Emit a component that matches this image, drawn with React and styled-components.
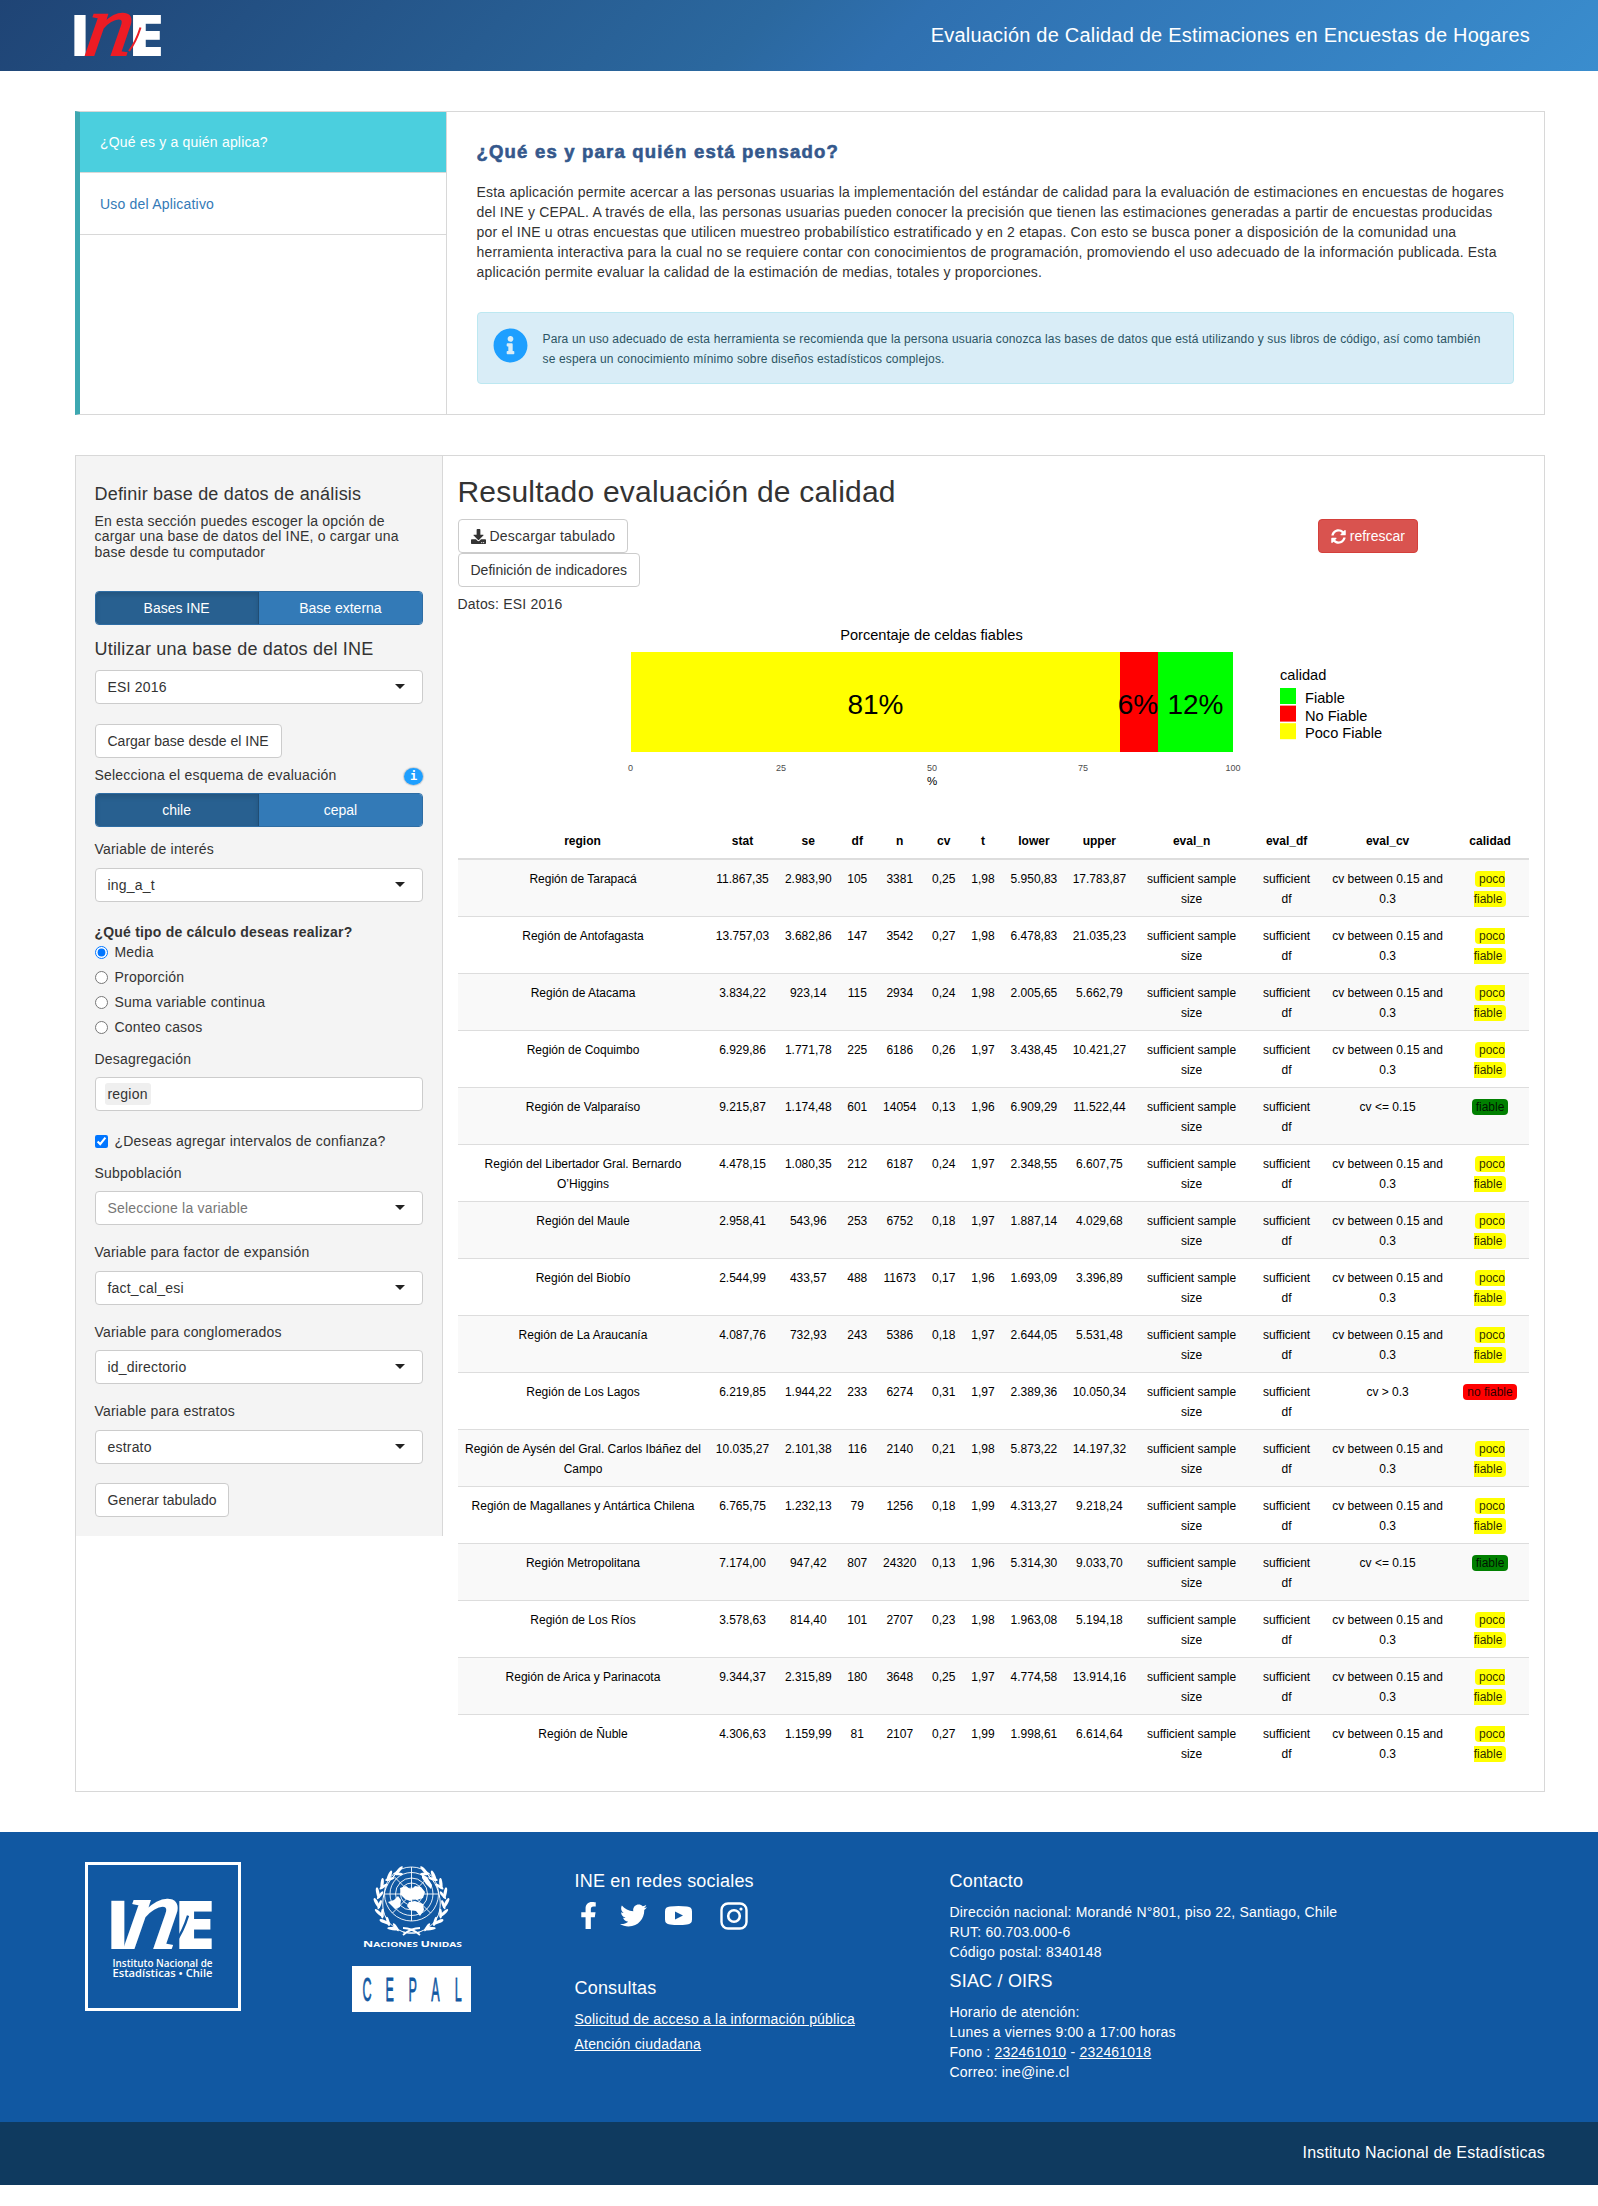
import React from 'react';
import styled, { createGlobalStyle } from 'styled-components';
import { FaDownload, FaFacebookF, FaInfoCircle, FaSyncAlt, FaTwitter } from 'react-icons/fa';

const GlobalStyle = createGlobalStyle`
  *, *::before, *::after { box-sizing: border-box; }
  body {
    margin: 0;
    background: #fff;
    color: #333;
    font: 14px/20px "Liberation Sans", Arial, sans-serif;
    letter-spacing: 0.2px;
  }
  h2, h3, h4, p { margin: 0; font-weight: 400; }
`;

const Header = styled.header`
  display: flex;
  align-items: center;
  justify-content: space-between;
  height: 71px;
  padding: 0 68px 0 75px;
  background: linear-gradient(135deg, #1f4475 0%, #2b689f 47%, #2f70b0 56%, #3a8dce 100%);
`;
const AppTitle = styled.h2`
  margin-bottom: 2px;
  color: #fff;
  font-size: 20px;
  line-height: 30px;
`;

const Page = styled.main`
  display: flex;
  flex-direction: column;
  gap: 40px;
  padding: 40px 53px 40px 75px;
`;

const IntroPanel = styled.section`
  display: grid;
  grid-template-columns: 367px 1fr;
  height: 304px;
  border: 1px solid #d8d8d8;
  border-left: 5px solid #3da8b1;
`;
const Tabs = styled.nav`
  border-right: 1px solid #d8d8d8;
`;
const Tab = styled.div`
  height: ${(p) => (p.$active ? 61 : 62)}px;
  padding: ${(p) => (p.$active ? 20 : 21)}px 20px 0;
  border-bottom: 1px solid #d8d8d8;
  background: ${(p) => (p.$active ? '#4bcfde' : '#fff')};
  color: ${(p) => (p.$active ? '#fff' : '#337ab7')};
`;
const IntroBody = styled.div`
  padding: 30px 30px 0 29.5px;
`;
const IntroTitle = styled.h3`
  margin-bottom: 20px;
  color: #34588c;
  font-size: 18.5px;
  font-weight: 700;
  line-height: 20px;
  letter-spacing: 1.2px;
  -webkit-text-stroke: 0.6px #34588c;
`;
const Alert = styled.div`
  display: flex;
  gap: 15px;
  height: 72px;
  margin-top: 30px;
  padding: 15px 28px 15px 15px;
  border: 1px solid #bce8f1;
  border-radius: 4px;
  background: #d9edf7;
  color: #2b5463;
  font-size: 12px;
  letter-spacing: 0.15px;
  svg { flex: none; color: #1e9fff; }
`;
const AlertText = styled.p`
  margin-top: 1px;
`;

const WorkPanel = styled.section`
  display: grid;
  grid-template-columns: 367px 1fr;
  align-items: start;
  border: 1px solid #d8d8d8;
`;
const Sidebar = styled.aside`
  display: flex;
  flex-direction: column;
  height: 1080px;
  padding: 28px 19px 0 18.5px;
  border-right: 1px solid #d8d8d8;
  background: #f4f4f4;
`;
const SideTitle = styled.h4`
  font-size: 18px;
  margin-top: ${(p) => p.$top || 0}px;
  margin-bottom: ${(p) => p.$bottom}px;
`;
const SideText = styled.p`
  height: 46px;
  margin-bottom: 31px;
  line-height: 15.4px;
`;
const Segmented = styled.div`
  display: grid;
  grid-template-columns: 1fr 1fr;
  flex: none;
  height: 34px;
  border: 1px solid #2e6da4;
  border-radius: 4px;
  overflow: hidden;
`;
const Segment = styled.button`
  border: 0;
  border-right: ${(p) => (p.$active ? '1px solid #204d74' : '0')};
  background: ${(p) => (p.$active ? '#286090' : '#337ab7')};
  box-shadow: ${(p) => (p.$active ? 'inset 0 3px 5px rgba(0, 0, 0, 0.125)' : 'none')};
  color: #fff;
  font: inherit;
  letter-spacing: 0;
`;
const Label = styled.label`
  display: flex;
  justify-content: space-between;
  height: 20px;
  flex: none;
  margin: ${(p) => p.$top}px 0 ${(p) => p.$bottom || 0}px;
  font-weight: ${(p) => (p.$bold ? 700 : 400)};
`;
const SelectBox = styled.div`
  display: flex;
  flex: none;
  align-items: center;
  justify-content: space-between;
  height: 34px;
  padding: 0 17px 0 12px;
  border: 1px solid #ccc;
  border-radius: 4px;
  background: #fff;
  color: ${(p) => (p.$muted ? '#777' : '#333')};
`;
const Caret = styled.span`
  border: 5px solid transparent;
  border-top-color: #222;
  border-bottom: 0;
  margin-top: -2px;
`;
const Chip = styled.span`
  margin-left: -3px;
  padding: 0 3px;
  border-radius: 3px;
  background: #efefef;
  line-height: 22px;
`;
const InfoDot = styled.span`
  width: 19px;
  height: 17px;
  margin-top: 3px;
  border-radius: 50%;
  background: #1e9fff;
  box-shadow: 0 0 1px 1px rgba(120, 130, 140, 0.35);
  color: #fff;
  font: 700 12px/16px "DejaVu Sans Mono", monospace;
  letter-spacing: 0;
  text-align: center;
`;
const Button = styled.button`
  display: inline-flex;
  align-items: center;
  gap: 4px;
  flex: none;
  align-self: flex-start;
  height: 34px;
  margin-top: ${(p) => p.$top || 0}px;
  padding: 0 12px;
  border: 1px solid ${(p) => (p.$danger ? '#d43f3a' : '#ccc')};
  border-radius: 4px;
  background: ${(p) => (p.$danger ? '#d9534f' : '#fff')};
  color: ${(p) => (p.$danger ? '#fff' : '#333')};
  font: inherit;
  letter-spacing: ${(p) => (p.$link ? 0.2 : 0)}px;
`;
const Choices = styled.div`
  display: grid;
  gap: 5px;
`;
const Choice = styled.label`
  display: flex;
  align-items: center;
  gap: 7px;
  height: 20px;
  flex: none;
  margin-top: ${(p) => p.$top || 0}px;
  input { width: 13px; height: 13px; margin: 1px 0 0; }
`;

const Results = styled.div`
  padding: 19px 15px 20px 14.5px;
`;
const ResultsTitle = styled.h2`
  margin-bottom: 10px;
  font-size: 30px;
  line-height: 34px;
`;
const Actions = styled.div`
  display: flex;
  justify-content: space-between;
  padding-right: 111px;
`;
const ActionStack = styled.div`
  display: flex;
  flex-direction: column;
`;
const Source = styled.p`
  margin-top: 7px;
`;
const Chart = styled.svg`
  display: block;
  font-family: "Liberation Sans", Arial, sans-serif;
  letter-spacing: 0;
`;

const Table = styled.table`
  width: 1071px;
  table-layout: fixed;
  border-collapse: separate;
  border-spacing: 0;
  color: #000;
  font-size: 12px;
  line-height: 20px;
  letter-spacing: 0;
  text-align: center;
  th { padding: 9px 0 7px; border-bottom: 2px solid #ddd; }
  td { padding: 9px 7px 7px; border-top: 1px solid #ddd; vertical-align: top; }
  td:first-child { padding-left: 5px; padding-right: 4px; }
  tbody tr:first-child td { border-top: 0; }
  tbody tr:nth-child(odd) { background: #f9f9f9; }
`;
const Grade = styled.span`
  padding: 1px 4px;
  border-radius: 4px;
  background: ${(p) => p.$color};
  color: rgba(0, 0, 0, 0.85);
`;

const Footer = styled.footer`
  display: grid;
  grid-template-columns: 267px 222.5px 375px 1fr;
  height: 290px;
  padding: 30px 53px 0 85px;
  background: #1158a2;
  color: #fff;
`;
const FooterColumn = styled.div`
  padding-top: 9px;
`;
const FooterTitle = styled.h4`
  margin: ${(p) => p.$top || 0}px 0 ${(p) => p.$bottom || 11}px;
  font-size: 18px;
  line-height: 20px;
`;
const FooterLink = styled.a`
  color: #fff;
  text-decoration: underline;
`;
const LinkRow = styled.div`
  margin-bottom: 5px;
`;
const Socials = styled.div`
  display: flex;
  align-items: center;
  height: 27px;
`;
const Social = styled.span`
  display: flex;
  width: 28px;
  justify-content: center;
  margin-right: ${(p) => p.$gap || 0}px;
`;
const InstituteMark = styled.div`
  width: 156px;
  height: 149px;
  border: 3px solid #fff;
`;
const Partner = styled.div`
  width: 119px;
`;
const CepalMark = styled.div`
  width: 119px;
  height: 46px;
  background: #fff;
`;
const BottomBar = styled.div`
  display: flex;
  align-items: center;
  justify-content: flex-end;
  height: 63px;
  padding: 0 53px 2px;
  background: #0f3a5f;
  color: #fff;
  font-size: 16px;
`;

const SANS = '"Open Sans", "Noto Sans", sans-serif';
const SERIF = '"Liberation Serif", serif';

const Wordmark = styled.svg`
  display: block;
  overflow: visible;
  letter-spacing: 0;
`;

function InstituteWordmark({ width, height, accent, edge }) {
  return (
    <Wordmark width={width} height={height} viewBox="0 0 87 41">
      <g fontFamily={SANS} fontWeight="800" fontSize="57.4" fill="#fff">
        <text x="-5" y="41">I</text>
        <text x="53" y="41" textLength="36" lengthAdjust="spacingAndGlyphs">E</text>
      </g>
      <text
        transform="translate(7.5 40.3) skewX(-9) scale(1.08 1)"
        fontFamily={SERIF}
        fontStyle="italic"
        fontSize="88"
        fill={accent}
        stroke={accent}
        strokeWidth="1.8"
      >
        n
      </text>
      <path d="M54 36 Q61 27 65.5 12.500" fill="none" stroke={edge} strokeWidth="2" />
    </Wordmark>
  );
}

const leafAngles = [20, 38, 56, 74, 92, 110, 128, 146];

function Laurel() {
  return (
    <g>
      <path d="M22 6 C8 18 2 50 26 61 Q34 66 47 63" fill="none" stroke="#fff" strokeWidth="1" />
      {leafAngles.map((a) => {
        const phi = ((a + 180) * Math.PI) / 180;
        const x = 38.5 + Math.sin(phi) * 33;
        const y = 32 - Math.cos(phi) * -31;
        return (
          <g key={a} fill="#fff">
            <ellipse cx={x - 2} cy={y} rx="1.6" ry="5.6" transform={`rotate(${62 - a} ${x} ${y})`} />
            <ellipse cx={x + 2} cy={y + 2} rx="1.4" ry="4.8" transform={`rotate(${112 - a} ${x} ${y})`} />
          </g>
        );
      })}
    </g>
  );
}

function UnitedNationsMark() {
  return (
    <svg width="119" height="104" viewBox="0 0 119 104" style={{ display: 'block' }}>
      <g transform="translate(21 4)">
        <g fill="none" stroke="#fff" strokeWidth="0.9">
          {[6, 11, 16, 21.5, 27].map((r) => (
            <circle key={r} cx="38.5" cy="28" r={r} />
          ))}
          <path d="M38.5 1v54M11.5 28h54M19.4 8.9l38.2 38.2M57.6 8.9L19.4 47.1" />
        </g>
        <g fill="#fff">
          <path d="M27 22l6-2 4 3 3-1 2-2 6 1 4 5-2 6-6 2-4-1-3 2-5-2-4-4z" />
          <path d="M15 36l6-2 4-4 3 4-1 7-5 2-3-3z" />
          <path d="M36 36l6-1 8 3 1 6-4 6-4-5-6-1-3-4z" />
          <path d="M49 8l5 3 5 8-1 4-5-5-4-6z" />
        </g>
        <g transform="translate(0 3)">
          <Laurel />
          <g transform="translate(77 0) scale(-1 1)">
            <Laurel />
          </g>
        </g>
        <path d="M30 69 Q38 62 47 62M47 69 Q39 62 30 62" fill="none" stroke="#fff" strokeWidth="1.8" />
      </g>
      <g fill="#fff" fontFamily={SANS} fontWeight="700" letterSpacing="0">
        <text x="11" y="85" fontSize="7" textLength="99" lengthAdjust="spacingAndGlyphs">
          <tspan fontSize="8.6">N</tspan>ACIONES <tspan fontSize="8.6">U</tspan>NIDAS
        </text>
      </g>
    </svg>
  );
}

const segments = [
  { x: 173, width: 489, color: '#ffff00', label: '81%', at: 417.5 },
  { x: 662, width: 38, color: '#ff0000', label: '6%', at: 680 },
  { x: 700, width: 75, color: '#00ff00', label: '12%', at: 737.5 },
];
const ticks = [[0, 172.5], [25, 323], [50, 474], [75, 625], [100, 775]];
const legend = [['Fiable', '#00ff00'], ['No Fiable', '#ff0000'], ['Poco Fiable', '#ffff00']];

function QualityChart() {
  return (
    <Chart width="1071" height="208" viewBox="0 0 1071 208">
      <text x="473.5" y="26" fontSize="14.6" textAnchor="middle">Porcentaje de celdas fiables</text>
      {segments.map((s) => (
        <rect key={s.label} x={s.x} y="38" width={s.width} height="100" fill={s.color} />
      ))}
      {segments.map((s) => (
        <text key={s.label} x={s.at} y="100" fontSize="28" textAnchor="middle">{s.label}</text>
      ))}
      {ticks.map(([value, x]) => (
        <text key={value} x={x} y="157" fontSize="9" fill="#4d4d4d" textAnchor="middle">{value}</text>
      ))}
      <text x="474" y="171" fontSize="11.5" textAnchor="middle">%</text>
      <text x="822" y="66" fontSize="14.6">calidad</text>
      {legend.map(([name, color], i) => (
        <g key={name}>
          <rect x="822" y={74 + i * 17.6} width="16" height="16" fill={color} />
          <text x="847" y={89 + i * 17.5} fontSize="14.6">{name}</text>
        </g>
      ))}
    </Chart>
  );
}

const columns = [
  ['region', 250], ['stat', 70], ['se', 61.5], ['df', 36.5], ['n', 48.5], ['cv', 39.3], ['t', 39.3],
  ['lower', 62.6], ['upper', 68.4], ['eval_n', 116], ['eval_df', 74], ['eval_cv', 128], ['calidad', 76.9],
];
const rows = [
  ['Región de Tarapacá', '11.867,35', '2.983,90', '105', '3381', '0,25', '1,98', '5.950,83', '17.783,87'],
  ['Región de Antofagasta', '13.757,03', '3.682,86', '147', '3542', '0,27', '1,98', '6.478,83', '21.035,23'],
  ['Región de Atacama', '3.834,22', '923,14', '115', '2934', '0,24', '1,98', '2.005,65', '5.662,79'],
  ['Región de Coquimbo', '6.929,86', '1.771,78', '225', '6186', '0,26', '1,97', '3.438,45', '10.421,27'],
  ['Región de Valparaíso', '9.215,87', '1.174,48', '601', '14054', '0,13', '1,96', '6.909,29', '11.522,44'],
  ['Región del Libertador Gral. Bernardo O’Higgins', '4.478,15', '1.080,35', '212', '6187', '0,24', '1,97', '2.348,55', '6.607,75'],
  ['Región del Maule', '2.958,41', '543,96', '253', '6752', '0,18', '1,97', '1.887,14', '4.029,68'],
  ['Región del Biobío', '2.544,99', '433,57', '488', '11673', '0,17', '1,96', '1.693,09', '3.396,89'],
  ['Región de La Araucanía', '4.087,76', '732,93', '243', '5386', '0,18', '1,97', '2.644,05', '5.531,48'],
  ['Región de Los Lagos', '6.219,85', '1.944,22', '233', '6274', '0,31', '1,97', '2.389,36', '10.050,34'],
  ['Región de Aysén del Gral. Carlos Ibáñez del Campo', '10.035,27', '2.101,38', '116', '2140', '0,21', '1,98', '5.873,22', '14.197,32'],
  ['Región de Magallanes y Antártica Chilena', '6.765,75', '1.232,13', '79', '1256', '0,18', '1,99', '4.313,27', '9.218,24'],
  ['Región Metropolitana', '7.174,00', '947,42', '807', '24320', '0,13', '1,96', '5.314,30', '9.033,70'],
  ['Región de Los Ríos', '3.578,63', '814,40', '101', '2707', '0,23', '1,98', '1.963,08', '5.194,18'],
  ['Región de Arica y Parinacota', '9.344,37', '2.315,89', '180', '3648', '0,25', '1,97', '4.774,58', '13.914,16'],
  ['Región de Ñuble', '4.306,63', '1.159,99', '81', '2107', '0,27', '1,99', '1.998,61', '6.614,64'],
];

function gradeOf(cv) {
  const value = parseFloat(cv.replace(',', '.'));
  if (value <= 0.15) return { rule: 'cv <= 0.15', name: 'fiable', color: '#008000' };
  if (value > 0.3) return { rule: 'cv > 0.3', name: 'no fiable', color: '#ff0000' };
  return { rule: 'cv between 0.15 and 0.3', name: 'poco fiable', color: '#ffff00' };
}

function ResultsTable() {
  return (
    <Table>
      <colgroup>
        {columns.map(([name, width]) => <col key={name} style={{ width }} />)}
      </colgroup>
      <thead>
        <tr>{columns.map(([name]) => <th key={name}>{name}</th>)}</tr>
      </thead>
      <tbody>
        {rows.map((row) => {
          const grade = gradeOf(row[5]);
          return (
            <tr key={row[0]}>
              {row.map((cell, i) => <td key={i}>{cell}</td>)}
              <td>sufficient sample size</td>
              <td>sufficient df</td>
              <td>{grade.rule}</td>
              <td><Grade $color={grade.color}>{grade.name}</Grade></td>
            </tr>
          );
        })}
      </tbody>
    </Table>
  );
}

function Select({ children, muted }) {
  return (
    <SelectBox $muted={muted}>
      {children}
      <Caret />
    </SelectBox>
  );
}

const calculations = ['Media', 'Proporción', 'Suma variable continua', 'Conteo casos'];

function Settings() {
  return (
    <Sidebar>
      <SideTitle $bottom={10}>Definir base de datos de análisis</SideTitle>
      <SideText>
        En esta sección puedes escoger la opción de cargar una base de datos del INE, o cargar una base desde tu computador
      </SideText>
      <Segmented>
        <Segment $active>Bases INE</Segment>
        <Segment>Base externa</Segment>
      </Segmented>
      <SideTitle $top={14} $bottom={11}>Utilizar una base de datos del INE</SideTitle>
      <Select>ESI 2016</Select>
      <Button $top={20}>Cargar base desde el INE</Button>
      <Label $top={7} $bottom={8}>
        Selecciona el esquema de evaluación
        <InfoDot>i</InfoDot>
      </Label>
      <Segmented>
        <Segment $active>chile</Segment>
        <Segment>cepal</Segment>
      </Segmented>
      <Label $top={12} $bottom={9}>Variable de interés</Label>
      <Select>ing_a_t</Select>
      <Label $top={20} $bold>¿Qué tipo de cálculo deseas realizar?</Label>
      <Choices>
        {calculations.map((name, i) => (
          <Choice key={name}>
            <input type="radio" name="calculo" defaultChecked={i === 0} />
            {name}
          </Choice>
        ))}
      </Choices>
      <Label $top={12} $bottom={8}>Desagregación</Label>
      <SelectBox><Chip>region</Chip></SelectBox>
      <Choice $top={20}>
        <input type="checkbox" defaultChecked />
        ¿Deseas agregar intervalos de confianza?
      </Choice>
      <Label $top={12} $bottom={8}>Subpoblación</Label>
      <Select muted>Seleccione la variable</Select>
      <Label $top={17} $bottom={9}>Variable para factor de expansión</Label>
      <Select>fact_cal_esi</Select>
      <Label $top={17} $bottom={8}>Variable para conglomerados</Label>
      <Select>id_directorio</Select>
      <Label $top={17} $bottom={9}>Variable para estratos</Label>
      <Select>estrato</Select>
      <Button $top={19}>Generar tabulado</Button>
    </Sidebar>
  );
}

export default function App() {
  return (
    <>
      <GlobalStyle />
      <Header>
        <InstituteWordmark width={87} height={41} accent="#ed1c24" edge="#ed1c24" />
        <AppTitle>Evaluación de Calidad de Estimaciones en Encuestas de Hogares</AppTitle>
      </Header>
      <Page>
        <IntroPanel>
          <Tabs>
            <Tab $active>¿Qué es y a quién aplica?</Tab>
            <Tab>Uso del Aplicativo</Tab>
          </Tabs>
          <IntroBody>
            <IntroTitle>¿Qué es y para quién está pensado?</IntroTitle>
            <p>
              Esta aplicación permite acercar a las personas usuarias la implementación del estándar de calidad para la
              evaluación de estimaciones en encuestas de hogares del INE y CEPAL. A través de ella, las personas usuarias
              pueden conocer la precisión que tienen las estimaciones generadas a partir de encuestas producidas por el INE
              u otras encuestas que utilicen muestreo probabilístico estratificado y en 2 etapas. Con esto se busca poner a
              disposición de la comunidad una herramienta interactiva para la cual no se requiere contar con conocimientos
              de programación, promoviendo el uso adecuado de la información publicada. Esta aplicación permite evaluar la
              calidad de la estimación de medias, totales y proporciones.
            </p>
            <Alert>
              <FaInfoCircle size={35} />
              <AlertText>
                Para un uso adecuado de esta herramienta se recomienda que la persona usuaria conozca las bases de datos
                que está utilizando y sus libros de código, así como también se espera un conocimiento mínimo sobre diseños
                estadísticos complejos.
              </AlertText>
            </Alert>
          </IntroBody>
        </IntroPanel>
        <WorkPanel>
          <Settings />
          <Results>
            <ResultsTitle>Resultado evaluación de calidad</ResultsTitle>
            <Actions>
              <ActionStack>
                <Button $link><FaDownload size={15} />Descargar tabulado</Button>
                <Button>Definición de indicadores</Button>
              </ActionStack>
              <Button $danger><FaSyncAlt size={15} />refrescar</Button>
            </Actions>
            <Source>Datos: ESI 2016</Source>
            <QualityChart />
            <ResultsTable />
          </Results>
        </WorkPanel>
      </Page>
      <Footer>
        <InstituteMark>
          <svg width="150" height="143" viewBox="0 0 150 143">
            <g transform="translate(24 36)">
              <InstituteWordmark width={101} height={48} accent="#fff" edge="#1158a2" />
            </g>
            <g fill="#fff" fontFamily={SANS} fontWeight="600" fontSize="10" letterSpacing="0">
              <text x="24.500" y="101.500" textLength="100" lengthAdjust="spacingAndGlyphs">Instituto Nacional de</text>
              <text x="24.500" y="112" textLength="100" lengthAdjust="spacingAndGlyphs">Estadísticas • Chile</text>
            </g>
          </svg>
        </InstituteMark>
        <Partner>
          <UnitedNationsMark />
          <CepalMark>
            <svg width="119" height="46" viewBox="0 0 119 46">
              <g fill="#1158a2" stroke="#1158a2" strokeWidth="0.8" fontFamily='"Liberation Sans", sans-serif' fontSize="33" letterSpacing="0">
                {['C', 'E', 'P', 'A', 'L'].map((letter, i) => (
                  <text key={letter} transform={`translate(${15 + i * 22.8} 35) scale(0.38 1)`} textAnchor="middle">{letter}</text>
                ))}
              </g>
            </svg>
          </CepalMark>
        </Partner>
        <FooterColumn>
          <FooterTitle>INE en redes sociales</FooterTitle>
          <Socials>
            <Social $gap={17}><FaFacebookF size={27} /></Social>
            <Social $gap={17}><FaTwitter size={27} /></Social>
            <Social $gap={27}>
              <svg width="27" height="19" viewBox="0 0 27 19">
                <path fillRule="evenodd" fill="#fff" d="M5 .6Q13.500-.6 22 .6Q27 .8 27 5.500V13.500Q27 18.200 22 18.500Q13.500 19.500 5 18.500Q0 18.200 0 13.500V5.500Q0 .8 5 .6ZM10 5.500V13.500L18 9.500Z" />
              </svg>
            </Social>
            <Social>
              <svg width="28" height="28" viewBox="0 0 28 28" fill="none" stroke="#fff">
                <rect x="1.500" y="1.500" width="25" height="25" rx="6.500" strokeWidth="2.400" />
                <circle cx="14" cy="14" r="5.800" strokeWidth="2.600" />
                <circle cx="21" cy="7" r="1.600" fill="#fff" stroke="none" />
              </svg>
            </Social>
          </Socials>
          <FooterTitle $top={49} $bottom={11}>Consultas</FooterTitle>
          <LinkRow><FooterLink>Solicitud de acceso a la información pública</FooterLink></LinkRow>
          <LinkRow><FooterLink>Atención ciudadana</FooterLink></LinkRow>
        </FooterColumn>
        <FooterColumn>
          <FooterTitle>Contacto</FooterTitle>
          <div>Dirección nacional: Morandé N°801, piso 22, Santiago, Chile</div>
          <div>RUT: 60.703.000-6</div>
          <div>Código postal: 8340148</div>
          <FooterTitle $top={9}>SIAC / OIRS</FooterTitle>
          <div>Horario de atención:</div>
          <div>Lunes a viernes 9:00 a 17:00 horas</div>
          <div>Fono : <FooterLink>232461010</FooterLink> - <FooterLink>232461018</FooterLink></div>
          <div>Correo: ine@ine.cl</div>
        </FooterColumn>
      </Footer>
      <BottomBar>Instituto Nacional de Estadísticas</BottomBar>
    </>
  );
}
